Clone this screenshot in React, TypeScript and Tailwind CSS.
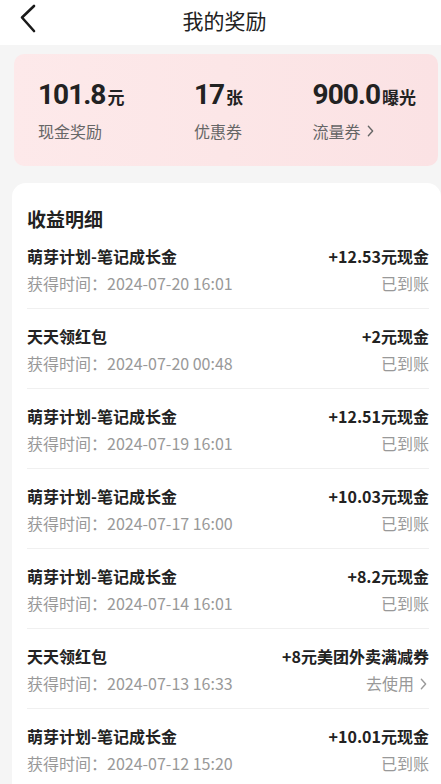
import React from "react";

const rows = [
  { t: "萌芽计划-笔记成长金", d: "2024-07-20 16:01", a: "+12.53元现金", s: "已到账" },
  { t: "天天领红包", d: "2024-07-20 00:48", a: "+2元现金", s: "已到账" },
  { t: "萌芽计划-笔记成长金", d: "2024-07-19 16:01", a: "+12.51元现金", s: "已到账" },
  { t: "萌芽计划-笔记成长金", d: "2024-07-17 16:00", a: "+10.03元现金", s: "已到账" },
  { t: "萌芽计划-笔记成长金", d: "2024-07-14 16:01", a: "+8.2元现金", s: "已到账" },
  { t: "天天领红包", d: "2024-07-13 16:33", a: "+8元美团外卖满减券", s: "去使用", arrow: true },
  { t: "萌芽计划-笔记成长金", d: "2024-07-12 15:20", a: "+10.01元现金", s: "已到账" },
];

const font = { fontFamily: '"Noto Sans CJK SC", "Noto Sans", sans-serif' };
const numFont = { fontFamily: 'Roboto, "Noto Sans", sans-serif' };

function Chevron({ className }: { className?: string }) {
  return (
    <svg viewBox="0 0 8 14" className={className} fill="none" stroke="currentColor" strokeWidth="1.6" strokeLinecap="round" strokeLinejoin="round">
      <path d="M1.5 1.5 L6.5 7 L1.5 12.5" />
    </svg>
  );
}

function Stat({ n, u, label, arrow }: { n: string; u: string; label: string; arrow?: boolean }) {
  return (
    <div className="flex flex-col">
      <div className="flex items-baseline text-[#222]">
        <span className="text-[28px] leading-[34px] font-bold tracking-[-1px]" style={numFont}>{n}</span>
        <span className="text-[17px] font-bold ml-[2px]">{u}</span>
      </div>
      <div className="text-[16px] leading-[22px] text-[#666] mt-[8px] flex items-center">
        {label}
        {arrow && <Chevron className="w-[7px] h-[12px] ml-[6px] text-[#666]" />}
      </div>
    </div>
  );
}

export default function App() {
  return (
    <div className="w-[441px] h-[784px] overflow-hidden bg-[#f5f5f5]" style={font}>
      <div className="relative h-[45px] bg-white flex items-center justify-center">
        <svg viewBox="0 0 20 30" className="absolute left-[18px] top-[4px] w-[20px] h-[30px]" fill="none" stroke="#1a1a1a" strokeWidth="2.6" strokeLinecap="round" strokeLinejoin="round">
          <path d="M16 2 L4 13.5 L16 27" />
        </svg>
        <div className="text-[21px] leading-none text-[#222] -mt-[5px] ml-[8px]">我的奖励</div>
      </div>

      <div className="ml-[14px] mr-[3px] mt-[9px] h-[112px] rounded-[10px] bg-gradient-to-r from-[#fde9ea] via-[#fce6e7] to-[#fbe2e4] flex justify-between pl-[24px] pr-[22px] pt-[24px]">
        <Stat n="101.8" u="元" label="现金奖励" />
        <Stat n="17" u="张" label="优惠券" />
        <Stat n="900.0" u="曝光" label="流量券" arrow />
      </div>

      <div className="ml-[12px] mt-[17px] bg-white rounded-tl-[14px] rounded-tr-[14px] pl-[15px] pr-[12px] pt-[22px]">
        <div className="text-[19px] leading-[28px] font-bold text-[#222] mb-[8px]">收益明细</div>
        {rows.map((r, i) => (
          <div key={i} className={`flex justify-between pt-[2px] pb-[11px] ${i < rows.length - 1 ? "border-b border-[#f0f0f0] mb-[12px]" : ""}`}>
            <div className="flex flex-col">
              <div className="text-[16px] leading-[27px] font-bold text-[#222]">{r.t}</div>
              <div className="text-[16px] leading-[27px] text-[#999]">获得时间：{r.d}</div>
            </div>
            <div className="flex flex-col items-end">
              <div className="text-[16px] leading-[27px] font-bold text-[#222]">{r.a}</div>
              <div className="text-[16px] leading-[27px] text-[#999] flex items-center">
                {r.s}
                {r.arrow && <Chevron className="w-[7px] h-[12px] ml-[6px] mr-[2px] text-[#999]" />}
              </div>
            </div>
          </div>
        ))}
      </div>
    </div>
  );
}
